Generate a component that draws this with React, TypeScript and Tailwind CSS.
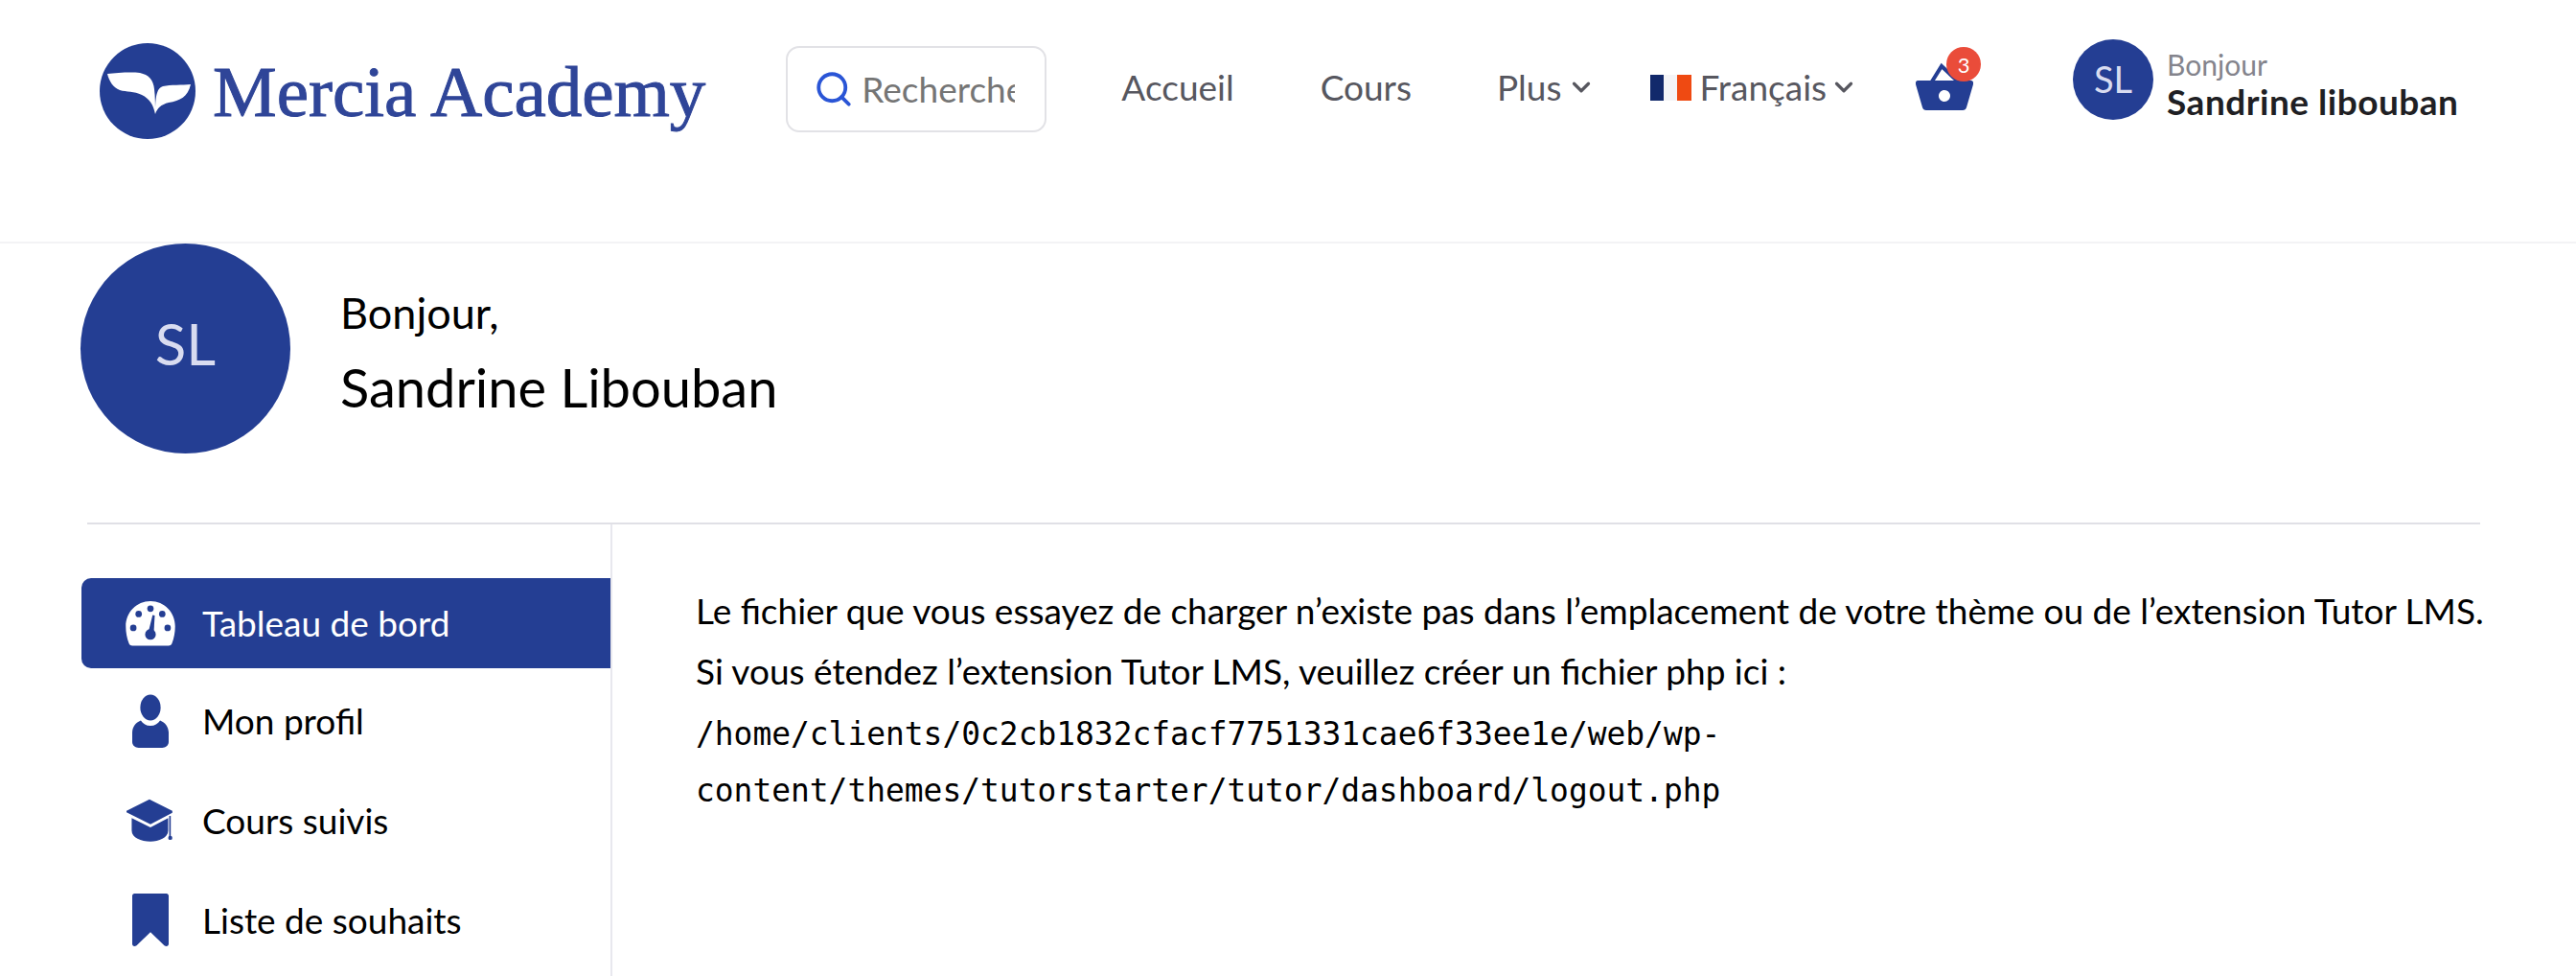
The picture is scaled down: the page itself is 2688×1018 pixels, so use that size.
// Dashboard page: top navigation, profile header, sidebar and the missing-file notice.
import { ChevronDown, Search } from "lucide-react";

const BLUE = "#243e93";

function GaugeIcon() {
  return (
    <svg viewBox="0 0 46 42" className="w-[52px] h-[47px]" fill="none">
      <path
        fillRule="evenodd"
        fill="#fff"
        d="M23 0C10 0 0 10.500 0 23.500C0 29 1 35 3 39.500C3.500 41 5 41.500 6 41.500H40C41 41.500 42.500 41 43 39.500C45 35 46 29 46 23.500C46 10.500 36 0 23 0Z"
      />
      <g fill={BLUE}>
        <circle cx="23" cy="7" r="3" />
        <circle cx="12" cy="12" r="3" />
        <circle cx="34" cy="12" r="3" />
        <circle cx="7" cy="25" r="3" />
        <circle cx="39" cy="25" r="3" />
        <circle cx="23" cy="31" r="5" />
        <path d="M21 29L25 13L27 13.500L26 31Z" />
      </g>
    </svg>
  );
}

function PersonIcon() {
  return (
    <svg viewBox="0 0 34 50" className="w-[38px] h-[57px]" fill={BLUE}>
      <ellipse cx="17" cy="12" rx="9.500" ry="12" />
      <path d="M8 24C3 26 0 30 0 36V44C0 47.500 3 49.500 6 49.500H28C31 49.500 34 47.500 34 44V36C34 30 31 26 26 24C24 27 21 29 17 29C13 29 10 27 8 24Z" />
    </svg>
  );
}

function CapIcon() {
  return (
    <svg viewBox="0 0 46 42" className="w-[50px] h-[47px]" fill={BLUE}>
      <path d="M22 0L44 11V13L23 24L0 12.500V11Z" />
      <path d="M5 18L23 27L40 18V30C40 37 31 40.500 23 40.500C14 40.500 5 37 5 30Z" />
      <rect x="41" y="16" width="1.500" height="20" />
      <circle cx="42" cy="37" r="2" />
    </svg>
  );
}

function BookmarkIcon() {
  return (
    <svg viewBox="0 0 34 50" className="w-[38px] h-[56px]" fill={BLUE}>
      <path d="M2 0H32C33 0 34 1 34 2V47C34 49 32 50 30 48.500L17 36L4 48.500C2 50 0 49 0 47V2C0 1 1 0 2 0Z" />
    </svg>
  );
}

function BasketIcon() {
  return (
    <svg viewBox="0 0 60 50" className="w-[60px] h-[50px]" fill="none">
      <path d="M17 20L27 4L44 20" stroke={BLUE} strokeWidth="4" />
      <path
        fillRule="evenodd"
        fill={BLUE}
        d="M2 19H58C59 19 60 20 60 21V23L53 47C52.500 49 51 50 49 50H11C9 50 7.500 49 7 47L0 23V21C0 20 1 19 2 19ZM30 29C26.700 29 24 31.700 24 35C24 38.300 26.700 41 30 41C33.300 41 36 38.300 36 35C36 31.700 33.300 29 30 29Z"
      />
    </svg>
  );
}

function LogoMark() {
  return (
    <svg viewBox="0 0 100 100" className="w-[100px] h-[100px]">
      <circle cx="50" cy="50" r="50" fill={BLUE} />
      <path
        fill="#fff"
        d="M8 32C18 31 32 30 42 31C51 33 56 38 57 48C58 56 58 66 58 74C56 64 52 58 44 54C36 50 28 51 21 49C14 46 10 40 8 32Z"
      />
      <path
        fill="#fff"
        d="M95 43C86 44 74 43 66 45C60 47 58 54 58 74C60 68 64 64 72 62C84 60 92 56 95 43Z"
      />
    </svg>
  );
}

const menu = [
  { label: "Mon profil", icon: <PersonIcon /> },
  { label: "Cours suivis", icon: <CapIcon /> },
  { label: "Liste de souhaits", icon: <BookmarkIcon /> },
];

export default function App() {
  return (
    <div className="h-[1018px] overflow-hidden bg-white font-['Lato','Noto_Sans',sans-serif] text-black">
      {/* top nav */}
      <header className="h-[254px] border-b-2 border-[#f3f3f5] pt-[40px]">
        <div className="flex items-start">
          <a className="ml-[104px] mt-[5px] flex items-center">
            <LogoMark />
            <span className="ml-[18px] whitespace-nowrap font-['Liberation_Serif',serif] text-[75px] leading-none text-[#2f4598] [-webkit-text-stroke:1px_#2f4598]">
              Mercia Academy
            </span>
          </a>
          <div className="ml-[84px] mt-[8px] flex h-[90px] w-[272px] items-center rounded-[14px] border-2 border-[#e2e2e6] pl-[27px]">
            <Search className="h-[42px] w-[42px] text-[#2a55d6]" strokeWidth={2.2} />
            <span className="ml-[8px] w-[160px] overflow-hidden whitespace-nowrap text-[37px] text-[#757575]">
              Recherche
            </span>
          </div>
          <nav className="mt-[6px] flex h-[90px] items-center text-[37px] text-[#57575f]">
            <span className="ml-[78px]">Accueil</span>
            <span className="ml-[90px]">Cours</span>
            <span className="ml-[89px]">Plus</span>
            <ChevronDown className="ml-[5px] h-[30px] w-[30px]" strokeWidth={2.600} />
            <span className="ml-[57px] flex h-[27px] w-[43px]">
              <span className="flex-1 bg-[#12296b]" />
              <span className="flex-1 bg-[#f4f4f6]" />
              <span className="flex-1 bg-[#ef4a12]" />
            </span>
            <span className="ml-[9px]">Français</span>
            <ChevronDown className="ml-[3px] h-[30px] w-[30px]" strokeWidth={2.600} />
            <span className="relative ml-[60px] -mt-[2px]">
              <BasketIcon />
              <span className="absolute -top-[16px] left-[32px] flex h-[36px] w-[36px] items-center justify-center rounded-full bg-[#ea4c3a] text-[22px] text-white">
                3
              </span>
            </span>
          </nav>
          <div className="ml-[104px] -mt-[2px] flex items-center">
            <div className="flex h-[84px] w-[84px] items-center justify-center rounded-full bg-[#243e93] text-[38px] text-[#d9dcf0]">
              SL
            </div>
            <div className="ml-[14px] pt-[12px]">
              <p className="text-[30px] leading-[35px] text-[#84848c]">Bonjour</p>
              <p className="text-[37px] font-bold leading-[42px] tracking-[0.5px] text-[#1f1f24]">Sandrine libouban</p>
            </div>
          </div>
        </div>
      </header>

      {/* profile header */}
      <section className="ml-[84px] flex h-[291px] items-start">
        <div className="flex h-[219px] w-[219px] items-center justify-center rounded-full bg-[#243e93] pb-[12px] text-[60px] text-[#d9dcf0]">
          SL
        </div>
        <div className="ml-[52px] pt-[40px]">
          <p className="text-[45px] leading-[64px]">Bonjour,</p>
          <p className="text-[56px] leading-[92px]">Sandrine Libouban</p>
        </div>
      </section>

      {/* dashboard body */}
      <div className="ml-[91px] mr-[100px] flex border-t-2 border-[#e0e0e6]">
        <aside className="-ml-[6px] w-[554px] shrink-0 border-r-2 border-[#e8e8ee] pb-[60px] pt-[56px]">
          <div className="flex h-[94px] items-center rounded-l-[10px] bg-[#243e93] pl-[46px] text-[37px] text-white">
            <GaugeIcon />
            <span className="ml-[28px]">Tableau de bord</span>
          </div>
          <ul className="mt-[3px]">
            {menu.map((m) => (
              <li key={m.label} className="flex h-[104px] items-center pl-[46px] text-[37px]">
                <span className="flex w-[52px] justify-center">{m.icon}</span>
                <span className="ml-[28px]">{m.label}</span>
              </li>
            ))}
          </ul>
        </aside>

        <main className="ml-[87px] pt-[60px] text-[37px]">
          <p className="whitespace-nowrap leading-[59px]">
            Le fichier que vous essayez de charger n’existe pas dans l’emplacement de votre thème ou de l’extension Tutor LMS.
          </p>
          <p className="mb-[3px] leading-[67px]">Si vous étendez l’extension Tutor LMS, veuillez créer un fichier php ici :</p>
          <code className="block w-[1100px] font-['DejaVu_Sans_Mono',monospace] text-[32.900px] leading-[59px]">
            /home/clients/0c2cb1832cfacf7751331cae6f33ee1e/web/wp-
            <br />
            content/themes/tutorstarter/tutor/dashboard/logout.php
          </code>
        </main>
      </div>
    </div>
  );
}
